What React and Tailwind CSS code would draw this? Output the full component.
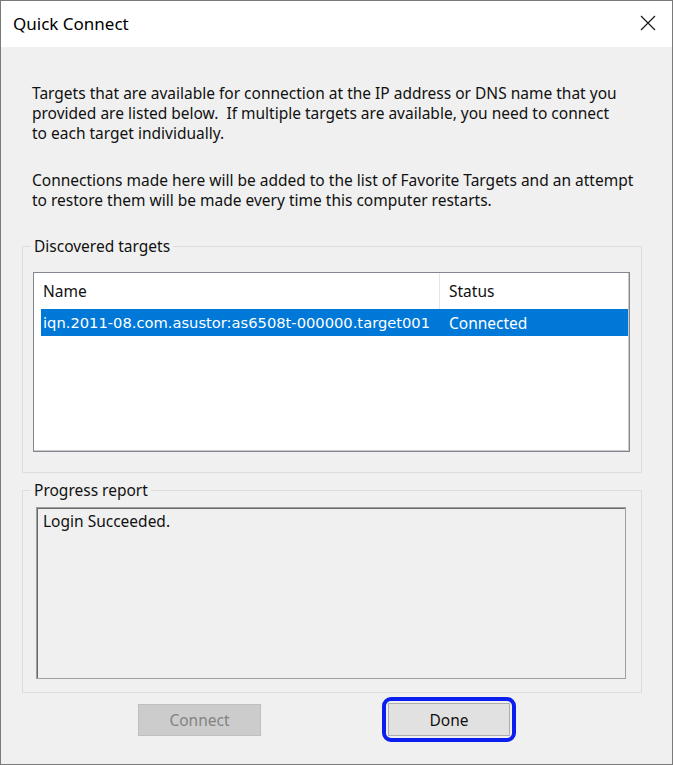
import React from "react";

export default function App() {
  return (
    <div className="w-[673px] h-[765px] border border-[#7a7a7a] bg-[#f0f0f0] flex flex-col text-black font-['Noto_Sans',sans-serif]">
      {/* title bar */}
      <div className="h-[46px] bg-white flex items-center justify-between pl-[12px] pr-[14px] shrink-0">
        <span className="text-[17px] leading-none pb-[2px]">Quick Connect</span>
        <svg width="16" height="16" viewBox="0 0 16 16" className="mr-[2px] mb-[2px]">
          <path d="M1 1 L15 15 M15 1 L1 15" stroke="#111" strokeWidth="1.1" fill="none" />
        </svg>
      </div>

      {/* body */}
      <div className="flex-1 flex flex-col text-[15.5px] leading-[20px] text-[#111]">
        <p className="mt-[36px] ml-[31px] w-[620px] whitespace-nowrap">
          Targets that are available for connection at the IP address or DNS name that you
          <br />
          provided are listed below.&nbsp; If multiple targets are available, you need to connect
          <br />
          to each target individually.
        </p>
        <p className="mt-[27px] ml-[31px] w-[630px] whitespace-nowrap">
          Connections made here will be added to the list of Favorite Targets and an attempt
          <br />
          to restore them will be made every time this computer restarts.
        </p>

        {/* discovered targets */}
        <fieldset className="mt-[26px] ml-[21px] w-[620px] h-[237px] border border-[#dcdcdc] rounded-[1px]">
          <legend className="ml-[8px] px-[3px] leading-[20px]">Discovered targets</legend>
          <div className="mt-[16px] ml-[10px] w-[597px] h-[180px] bg-white border border-[#828790] shadow-[inset_-1px_-1px_0_#c9c9c9]">
            <div className="flex h-[36px] items-center">
              <div className="w-[406px] h-full flex items-center pl-[9px] border-r border-[#e5e5e5]">Name</div>
              <div className="pl-[9px]">Status</div>
            </div>
            <div className="flex h-[27px] items-center ml-[7px] mr-[1px] bg-[#0078d7] text-white">
              <div className="w-[399px] pl-[2px] text-[14.7px] font-['DejaVu_Sans',sans-serif] whitespace-nowrap">
                iqn.2011-08.com.asustor:as6508t-000000.target001
              </div>
              <div className="pl-[9px]">Connected</div>
            </div>
          </div>
        </fieldset>

        {/* progress report */}
        <fieldset className="mt-[7px] ml-[21px] w-[620px] h-[213px] border border-[#dcdcdc] rounded-[1px]">
          <legend className="ml-[8px] px-[3px] leading-[20px]">Progress report</legend>
          <div className="mt-[7px] ml-[13px] w-[590px] h-[172px] border border-[#a0a0a0] shadow-[inset_1px_1px_0_#696969] pl-[6px] pt-[3px]">
            Login Succeeded.
          </div>
        </fieldset>

        {/* buttons */}
        <div className="flex items-start mt-[4px]">
          <button
            disabled
            className="mt-[7px] ml-[137px] w-[123px] h-[32px] bg-[#cccccc] border border-[#bfbfbf] text-[#838383]"
          >
            Connect
          </button>
          <div className="ml-[121px] rounded-[9px] border-4 border-[#0a1ef0] p-[2px]">
            <button className="w-[122px] h-[33px] bg-[#e1e1e1] border border-[#adadad] text-[#111]">
              Done
            </button>
          </div>
        </div>
      </div>
    </div>
  );
}
